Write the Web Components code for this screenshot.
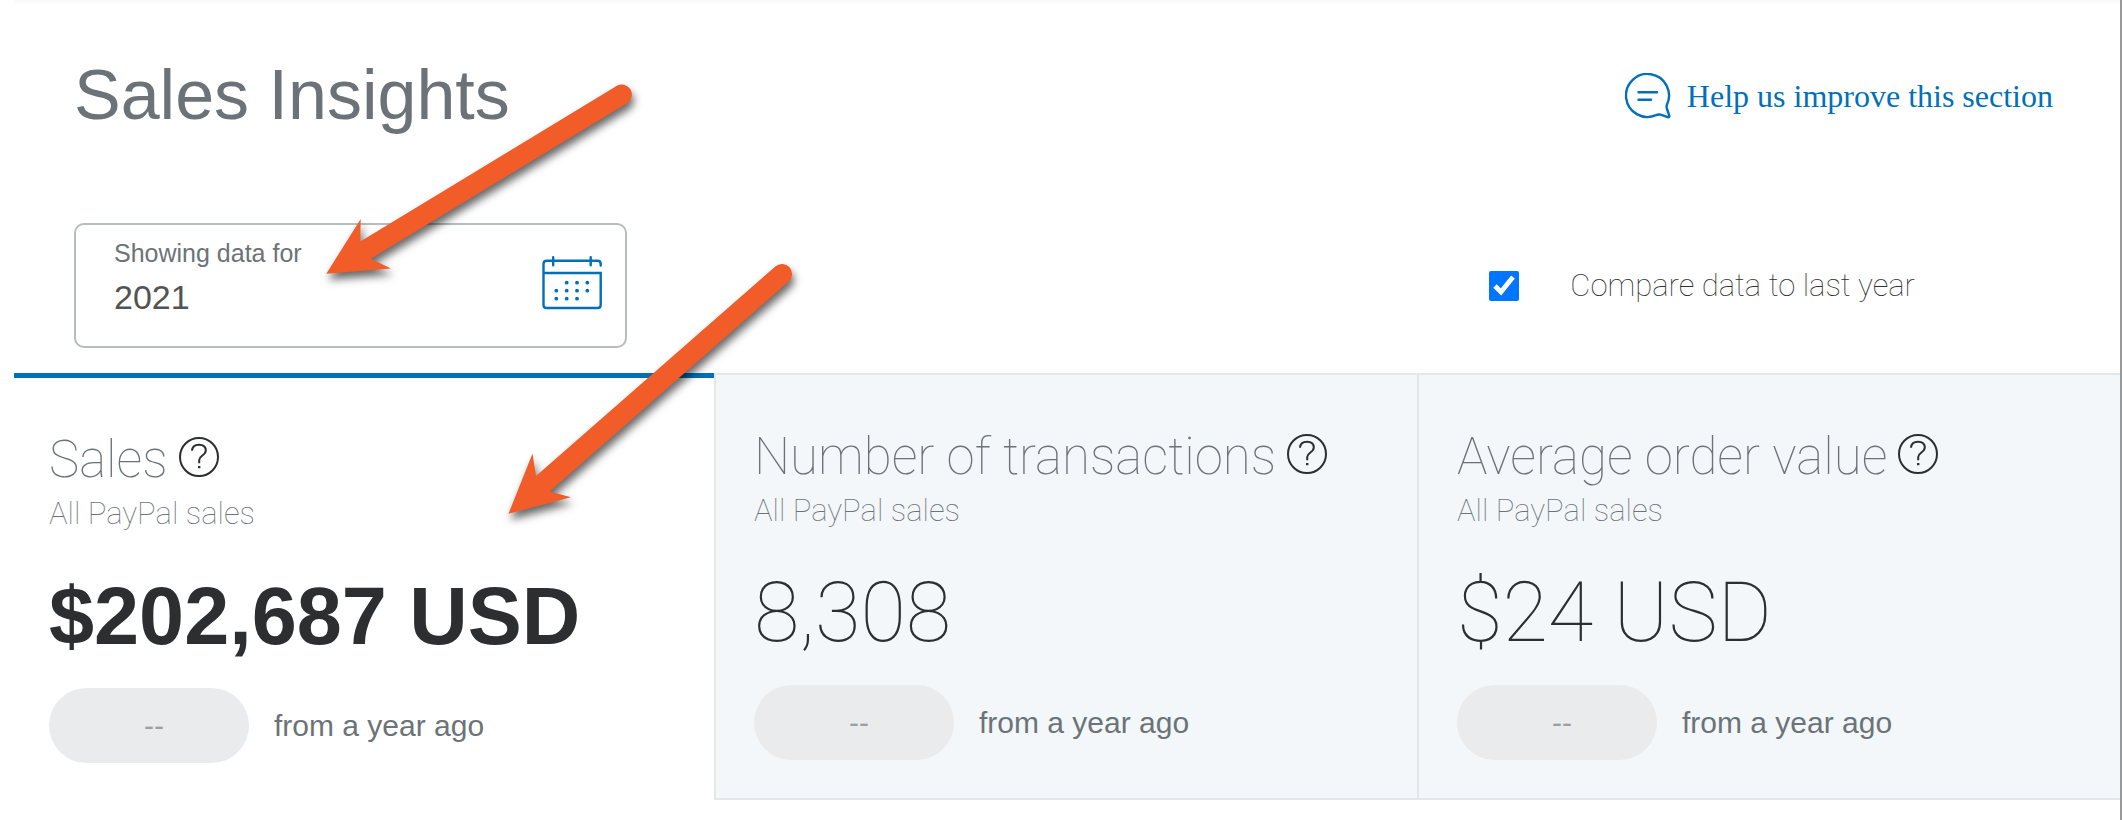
<!DOCTYPE html>
<html lang="en">
<head>
<meta charset="utf-8">
<title>Sales Insights</title>
<style>
  body { margin: 0; background: #fff; font-family: "Liberation Sans", Arial, sans-serif; color: #2c2e2f; }
</style>
</head>
<body>
<insights-page>
  <insights-header slot="header" heading="Sales Insights">Help us improve this section</insights-header>
  <date-picker slot="controls" label="Showing data for" value="2021"></date-picker>
  <compare-toggle slot="controls">Compare data to last year</compare-toggle>
  <metric-card slot="cards" selected heading="Sales" value="$202,687 USD" change="--">All PayPal sales</metric-card>
  <metric-card slot="cards" heading="Number of transactions" value="8,308" change="--">All PayPal sales</metric-card>
  <metric-card slot="cards" heading="Average order value" value="$24 USD" change="--">All PayPal sales</metric-card>
  <arrow-notes slot="notes"></arrow-notes>
</insights-page>

<script>
class BaseElement extends HTMLElement {
  connectedCallback() {
    if (!this.shadowRoot) this.attachShadow({ mode: "open" }).innerHTML = this.render();
  }
  attr(name) { return this.getAttribute(name) || ""; }
}

customElements.define("insights-page", class extends BaseElement {
  render() {
    return `
<style>
  :host { display: block; position: relative; box-sizing: border-box; min-height: 100vh; border-right: 2px solid #999; }
  .shade { height: 5px; margin-left: 14px; background: linear-gradient(#f8f8f8, #fff); }
  .controls { display: flex; align-items: center; justify-content: space-between; margin-top: 88px; padding: 0 205px 0 74px; }
  .cards { display: grid; grid-template-columns: 700fr 703fr 703fr; margin: 25px 0 0 14px; }
</style>
<div class="shade"></div>
<slot name="header"></slot>
<div class="controls"><slot name="controls"></slot></div>
<main class="cards"><slot name="cards"></slot></main>
<slot name="notes"></slot>`;
  }
});

customElements.define("insights-header", class extends BaseElement {
  render() {
    return `
<style>
  :host { display: flex; align-items: center; justify-content: space-between; padding: 50px 67px 0 74px; }
  h1 { margin: 0; font-size: 70px; line-height: 80px; font-weight: 400; color: #6c7378; }
  a { display: flex; align-items: center; gap: 16px; padding-top: 2px; color: #0070ba; text-decoration: none;
      font: 32px/40px "Liberation Serif", "Times New Roman", serif; }
  svg { display: block; width: 46px; height: 46px; fill: none; stroke: #0070ba; stroke-width: 2.4; stroke-linecap: round; stroke-linejoin: round; }
</style>
<h1>${this.attr("heading")}</h1>
<a href="#feedback">
  <svg viewBox="0 0 46 46" aria-hidden="true">
    <path d="M31 42.2A21.5 21.5 0 1 1 42 31.5C41.3 33.2 41.5 34.5 42 36L44.2 42.5C44.6 43.8 44 44.4 42.8 44.1L35.5 41.7C33.8 41.1 32.5 41.5 31 42.2Z"/>
    <path d="M13.5 19.2H32M13.5 26.8H26"/>
  </svg>
  <span><slot></slot></span>
</a>`;
  }
});

customElements.define("date-picker", class extends BaseElement {
  render() {
    return `
<style>
  :host { display: block; }
  button { display: flex; align-items: flex-start; justify-content: space-between; box-sizing: border-box; width: 553px; height: 125px;
           margin: 0; padding: 13px 23px 0 38px; border: 2px solid #b7bcbf; border-radius: 10px; background: #fff; text-align: left; font-family: inherit; }
  .text { display: grid; gap: 9px; }
  .label { font-size: 25px; line-height: 30px; color: #6c7378; }
  .value { font-size: 34px; line-height: 40px; color: #515354; }
  svg { display: block; width: 60px; height: 54px; padding-top: 18px; fill: none; stroke: #0070ba; stroke-width: 2.4; stroke-linecap: round; }
  .dots { fill: #0070ba; stroke: none; }
</style>
<button type="button" aria-haspopup="dialog">
  <span class="text"><span class="label">${this.attr("label")}</span><span class="value">${this.attr("value")}</span></span>
  <svg viewBox="0 0 60 54" aria-hidden="true">
    <path d="M58.7 9.5V8Q58.7 4.8 55.5 4.8H4.8Q1.5 4.8 1.5 8V49Q1.5 52 4.5 52H55.7Q58.7 52 58.7 49V17H1.5M11.2 1.2V9.2M48.7 1.2V9.2"/>
    <g class="dots">
      <circle cx="24.7" cy="26.7" r="1.9"/><circle cx="35" cy="26.7" r="1.9"/><circle cx="45.3" cy="26.7" r="1.9"/>
      <circle cx="14.3" cy="34.7" r="1.9"/><circle cx="24.7" cy="34.7" r="1.9"/><circle cx="35" cy="34.7" r="1.9"/><circle cx="45.3" cy="34.7" r="1.9"/>
      <circle cx="14.3" cy="42.7" r="1.9"/><circle cx="24.7" cy="42.7" r="1.9"/><circle cx="35" cy="42.7" r="1.9"/>
    </g>
  </svg>
</button>`;
  }
});

customElements.define("compare-toggle", class extends BaseElement {
  render() {
    return `
<style>
  :host { display: block; }
  label { display: flex; align-items: center; gap: 51px; font: 100 31px/40px Roboto, sans-serif; color: #2c2e2f; }
  input { width: 30px; height: 30px; margin: 0; }
</style>
<label><input type="checkbox" checked><span><slot></slot></span></label>`;
  }
});

customElements.define("metric-card", class extends BaseElement {
  render() {
    return `
<style>
  :host { display: block; box-sizing: border-box; padding: 52px 38px 38px; border: 2px solid #e1e7eb; border-right: 0; background: #f3f7fa; }
  :host([selected]) { padding: 52px 35px 35px; border: 0; border-top: 5px solid #0070ba; background: #fff; }
  .title { display: flex; align-items: center; gap: 11px; }
  h2 { margin: 0; font: 100 51px/60px Roboto, sans-serif; color: #6c7378; }
  .help { display: block; width: 40px; height: 40px; margin: 0 0 6px; padding: 0; border: 0; background: none; }
  svg { display: block; fill: none; stroke: #2c2e2f; stroke-width: 2; }
  .sub { margin: 4px 0 0; font: 100 31px/40px Roboto, sans-serif; color: #6c7378; }
  .value { margin: 34px 0 0; font: 100 83px/96px Roboto, sans-serif; color: #2c2e2f; }
  :host([selected]) .value { font: 700 81px/96px "Liberation Sans", Arial, sans-serif; }
  .change { display: flex; align-items: center; gap: 25px; margin-top: 24px; font-size: 30px; line-height: 38px; color: #6c7378; }
  .pill { display: flex; align-items: center; justify-content: center; box-sizing: border-box; width: 200px; height: 75px;
          padding-left: 10px; border-radius: 38px; background: #eaebed; color: #9a9fa3; }
</style>
<div class="title">
  <h2>${this.attr("heading")}</h2>
  <button class="help" type="button" aria-label="About ${this.attr("heading")}">
    <svg width="40" height="40" viewBox="0 0 40 40" aria-hidden="true">
      <circle cx="20" cy="20" r="19"/>
      <path d="M13 13.8C13.2 9.8 16 7.7 20 7.7S26.8 9.8 26.8 13.6C26.8 18.4 20.2 18.6 20.2 23V26.3"/>
      <path d="M20.2 29V31.2" stroke-width="2.4"/>
    </svg>
  </button>
</div>
<p class="sub"><slot></slot></p>
<p class="value">${this.attr("value")}</p>
<div class="change"><span class="pill">${this.attr("change")}</span><span>from a year ago</span></div>`;
  }
});

/* Callout arrows drawn over the page content. */
customElements.define("arrow-notes", class extends BaseElement {
  render() {
    return `
<style>
  :host { position: absolute; left: 0; top: 0; pointer-events: none; }
  svg { display: block; fill: #f15c29; filter: drop-shadow(2px 6px 4px rgba(0, 0, 0, .6)); }
</style>
<svg width="820" height="540" viewBox="0 0 820 540" aria-hidden="true">
  <path d="M326.3 273.7L360.7 219L360.3 241.5L616.5 86A10 10 0 0 1 627 103.2L370.7 258.7L391 268.5Z"/>
  <path d="M508.5 513.7L532.5 453.5L536 476L775.3 266.4A10 10 0 0 1 788.6 281.6L549.7 491.5L571 497.3Z"/>
</svg>`;
  }
});
</script>
</body>
</html>
